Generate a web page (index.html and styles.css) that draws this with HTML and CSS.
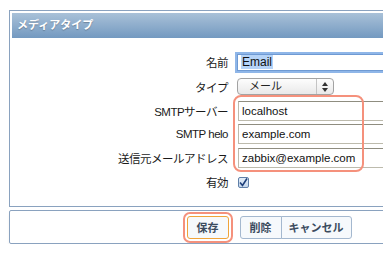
FILE: index.html
```html
<!DOCTYPE html>
<html lang="ja">
<head>
  <meta charset="UTF-8" />
  <title>メディアタイプ</title>
  <link rel="stylesheet" href="styles.css">
</head>
<body>
  <div class="viewport">
    <div class="panel">
      <div class="panel-head">メディアタイプ</div>
      <div class="form">
        <div class="row r1">
          <div class="label">名前</div>
          <div class="input focus"><span class="picked">Email</span></div>
        </div>
        <div class="row r2">
          <div class="label">タイプ</div>
          <div class="select">
            <span class="select-text">メール</span>
            <span class="select-arrows">
              <svg width="6" height="10" viewBox="0 0 6 10"><path d="M3 0 L6 4 L0 4 Z M0 6 L6 6 L3 10 Z" fill="#333"/></svg>
            </span>
          </div>
        </div>
        <div class="row r3">
          <div class="label">SMTPサーバー</div>
          <div class="input">localhost</div>
        </div>
        <div class="row r4">
          <div class="label">SMTP helo</div>
          <div class="input">example.com</div>
        </div>
        <div class="row r5">
          <div class="label">送信元メールアドレス</div>
          <div class="input">zabbix@example.com</div>
        </div>
        <div class="row r6">
          <div class="label">有効</div>
          <div class="check">
            <svg width="9" height="9" viewBox="0 0 9 9"><path d="M1 4.5 L3.5 7.5 L8 0.5" fill="none" stroke="#1d3f7a" stroke-width="1.6"/></svg>
          </div>
        </div>
        <div class="mark"></div>
      </div>
    </div>
    <div class="footer">
      <button class="btn save">保存</button>
      <div class="btn-group">
        <button class="btn">削除</button>
        <button class="btn">キャンセル</button>
      </div>
    </div>
  </div>
</body>
</html>
```

FILE: styles.css
```css
* {
  box-sizing: border-box;
}
body {
  margin: 0;
  background: #fff;
  font-family: "Liberation Sans", "Noto Sans CJK JP", sans-serif;
  color: #222;
}
.viewport {
  width: 383px;
  padding: 10px 0 0 9px;
  overflow: hidden;
}
.panel {
  width: 520px;
  border: 1px solid #8aa2bf;
  padding: 2px 2px 0 2px;
}
.panel-head {
  height: 25px;
  padding-left: 5px;
  line-height: 25px;
  font-size: 11px;
  font-weight: bold;
  color: #fff;
  text-shadow: 0 1px 1px rgba(0,0,0,0.25);
  background: linear-gradient(to bottom, #a9c1d8, #7399c0);
}
.form {
  position: relative;
  padding: 12px 0 12px 0;
}
.row {
  display: flex;
  align-items: center;
  height: 24px;
}
.r2 {
  height: 25px;
}
.r3 {
  height: 23px;
}
.label {
  width: 216px;
  margin-right: 9px;
  text-align: right;
  font-size: 11.5px;
  letter-spacing: -0.5px;
  color: #1a1a1a;
}
.input {
  width: 200px;
  height: 20px;
  margin-left: 1px;
  padding-left: 3px;
  line-height: 18px;
  font-size: 11.5px;
  color: #111;
  border: 1px solid #bdbbad;
  border-top-color: #8f8d80;
  background: #fff;
}
.input.focus {
  height: 17px;
  margin-left: 0;
  line-height: 15px;
  font-size: 12px;
  border-color: #6f9ad3;
  box-shadow: 0 0 0 2px #8fb6e8;
}
.picked {
  background: #b5d3f7;
  padding: 0 1px;
}
.select {
  display: flex;
  width: 97px;
  height: 17px;
  border: 1px solid #a3a3a3;
  border-radius: 4px;
  background: linear-gradient(to bottom, #fdfdfd, #e9e9e9);
  font-size: 11px;
}
.select-text {
  flex: 1;
  padding-left: 11px;
  line-height: 15px;
}
.select-arrows {
  width: 17px;
  border-left: 1px solid #c4c4c4;
  display: flex;
  align-items: center;
  justify-content: center;
}
.check {
  width: 11px;
  height: 11px;
  margin-left: 1px;
  border: 1px solid #5f7fa8;
  border-radius: 2px;
  background: linear-gradient(to bottom, #e3edf8, #c4d6ec);
  display: flex;
  align-items: center;
  justify-content: center;
}
.mark {
  position: absolute;
  left: 221px;
  top: 57px;
  width: 131px;
  height: 77px;
  border: 2px solid #f5917c;
  border-radius: 8px;
}
.footer {
  width: 520px;
  margin-top: 3px;
  height: 34px;
  border: 1px solid #8aa2bf;
  border-radius: 2px;
  box-shadow: 0 3px 3px rgba(0,0,0,0.06);
  display: flex;
  align-items: center;
  justify-content: center;
  gap: 11px;
}
.btn {
  height: 23px;
  padding: 0;
  font-family: "Noto Sans CJK JP", sans-serif;
  font-size: 11px;
  font-weight: bold;
  color: #3b4b5e;
  background: #f6f9fc;
  border: 1px solid #a4b8cf;
  border-radius: 3px;
}
.save {
  width: 42px;
  border-color: #f0a43a;
  outline: 2px solid #f5917c;
  outline-offset: 2px;
}
.btn-group {
  display: flex;
}
.btn-group .btn {
  width: 42px;
  border-radius: 3px 0 0 3px;
}
.btn-group .btn + .btn {
  width: 71px;
  border-left: 1px solid #a4b8cf;
  border-radius: 0 3px 3px 0;
  margin-left: -1px;
}
```
